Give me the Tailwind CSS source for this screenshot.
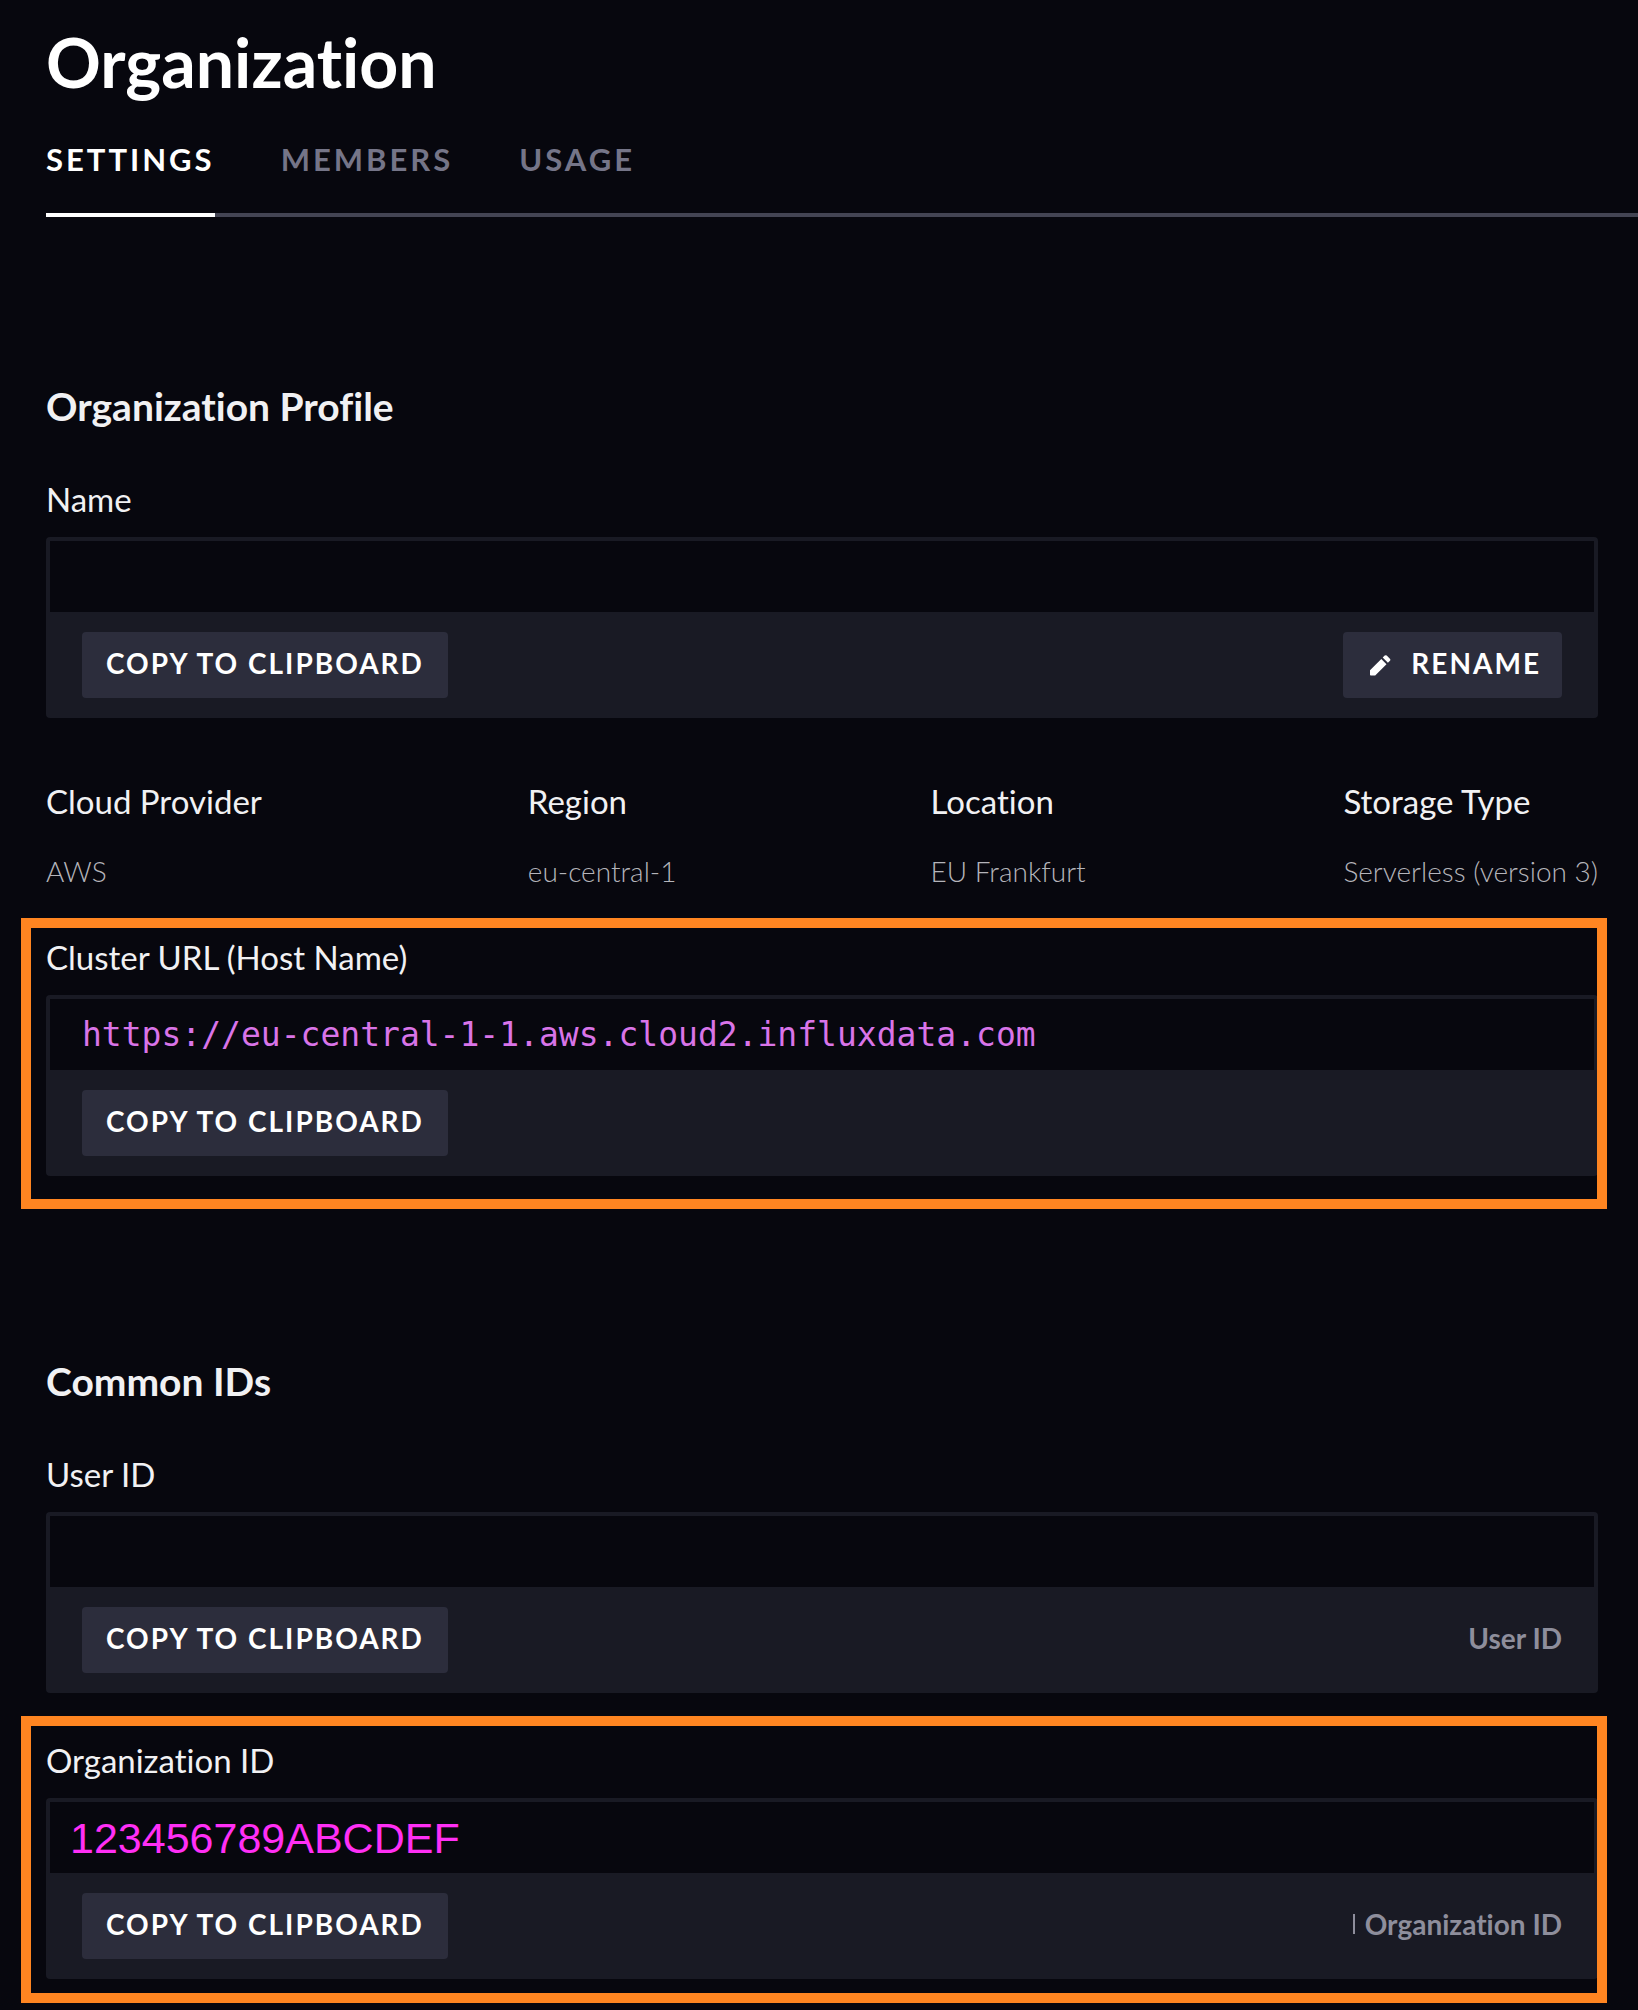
<!DOCTYPE html>
<html lang="en">
<head>
<meta charset="utf-8">
<meta name="viewport" content="width=device-width, initial-scale=1">
<title>Organization Settings</title>
<script src="https://cdn.jsdelivr.net/npm/@tailwindcss/browser@4"></script>
</head>
<body class="bg-[#07070e] font-['Lato',sans-serif] text-[#f1f1f3] [font-variant-ligatures:none]">
<div class="min-h-screen pl-[46px] pt-[22px] pb-[31px]">
  <header>
    <h1 class="text-[68px] leading-20 font-bold text-white">Organization</h1>
    <nav class="mt-[33px] flex gap-[66px] border-b-4 border-[#434453] text-[31px] leading-12 font-bold tracking-[3px] text-[#757588]">
      <a href="#settings" aria-current="page" class="-mb-1 border-b-4 border-white pb-[30px] text-white">SETTINGS</a>
      <a href="#members" class="pb-[30px]">MEMBERS</a>
      <a href="#usage" class="pb-[30px]">USAGE</a>
    </nav>
  </header>

  <main class="mr-10 mt-[165px]">
    <section>
      <h2 class="text-[39px] leading-12 font-bold">Organization Profile</h2>

      <div class="mt-[49px]">
        <label for="org-name" class="block text-[33px] leading-10">Name</label>
        <div class="mt-[18px] rounded-sm bg-[#191a24] px-1 pt-1">
          <input id="org-name" type="text" readonly class="block h-[71px] w-full bg-[#07070e] px-8 outline-none">
          <div class="flex items-center justify-between px-8 py-5">
            <button type="button" class="h-[66px] rounded-sm bg-[#2c2d3c] px-6 pb-1 text-[28px] font-bold tracking-[2px] text-white">COPY TO CLIPBOARD</button>
            <button type="button" class="flex h-[66px] items-center gap-5 rounded-sm bg-[#2c2d3c] pr-[21px] pl-[27px] text-[28px] font-bold tracking-[2px] text-white">
              <svg class="size-[21px]" viewBox="0 0 21 21" fill="currentColor" aria-hidden="true"><path d="M0 15.3 11.3 4l5.2 5.2L5.2 20.500H0.800Q0 20.500 0 19.700ZM12.700 2.600 14.700 0.600Q15.700-.2 16.700.6L19.900 3.800Q20.800 4.800 20 5.800L17.900 7.800Z"/></svg>
              <span class="pb-1">RENAME</span>
            </button>
          </div>
        </div>
      </div>

      <dl class="mt-[63px] grid grid-cols-[482fr_403fr_413fr_254fr]">
        <div><dt class="text-[33px] leading-10">Cloud Provider</dt><dd class="mt-[34px] text-[28px] leading-8 font-light text-[#b4b4ba]">AWS</dd></div>
        <div><dt class="text-[33px] leading-10">Region</dt><dd class="mt-[34px] text-[28px] leading-8 font-light text-[#b4b4ba]">eu-central-1</dd></div>
        <div><dt class="text-[33px] leading-10">Location</dt><dd class="mt-[34px] text-[28px] leading-8 font-light text-[#b4b4ba]">EU Frankfurt</dd></div>
        <div><dt class="text-[33px] leading-10">Storage Type</dt><dd class="mt-[34px] text-[28px] leading-8 font-light whitespace-nowrap text-[#b4b4ba]">Serverless (version 3)</dd></div>
      </dl>

      <div class="relative mt-[50px]">
        <label for="cluster-url" class="block text-[33px] leading-10">Cluster URL (Host Name)</label>
        <div class="mt-[18px] rounded-sm bg-[#191a24] px-1 pt-1">
          <input id="cluster-url" type="text" readonly value="https://eu-central-1-1.aws.cloud2.influxdata.com" class="block h-[71px] w-full bg-[#07070e] px-8 font-['DejaVu_Sans_Mono',monospace] text-[33px] text-[#d974e8] outline-none">
          <div class="flex items-center justify-between px-8 py-5">
            <button type="button" class="h-[66px] rounded-sm bg-[#2c2d3c] px-6 pb-1 text-[28px] font-bold tracking-[2px] text-white">COPY TO CLIPBOARD</button>
          </div>
        </div>
        <div class="pointer-events-none absolute -top-[19px] -right-[9px] -bottom-[33px] -left-[25px] border-10 border-[#ff8521]"></div>
      </div>
    </section>

    <section class="mt-[181px]">
      <h2 class="text-[39px] leading-12 font-bold">Common IDs</h2>

      <div class="mt-[49px]">
        <label for="user-id" class="block text-[33px] leading-10">User ID</label>
        <div class="mt-[18px] rounded-sm bg-[#191a24] px-1 pt-1">
          <input id="user-id" type="text" readonly class="block h-[71px] w-full bg-[#07070e] px-8 outline-none">
          <div class="flex items-center justify-between px-8 py-5">
            <button type="button" class="h-[66px] rounded-sm bg-[#2c2d3c] px-6 pb-1 text-[28px] font-bold tracking-[2px] text-white">COPY TO CLIPBOARD</button>
            <span class="pb-1 text-[28px] font-bold text-[#8e8e9c]">User ID</span>
          </div>
        </div>
      </div>

      <div class="relative mt-[47px]">
        <label for="org-id" class="block text-[33px] leading-10">Organization ID</label>
        <div class="mt-[18px] rounded-sm bg-[#191a24] px-1 pt-1">
          <input id="org-id" type="text" readonly value="123456789ABCDEF" class="block h-[71px] w-full bg-[#07070e] px-5 pt-0.5 font-['Liberation_Sans',sans-serif] text-[43px] text-[#ff2ff5] outline-none">
          <div class="flex items-center justify-between px-8 py-5">
            <button type="button" class="h-[66px] rounded-sm bg-[#2c2d3c] px-6 pb-1 text-[28px] font-bold tracking-[2px] text-white">COPY TO CLIPBOARD</button>
            <span class="flex items-center gap-[10px] pb-1 text-[28px] font-bold text-[#8e8e9c]"><span class="h-5 w-[2px] bg-[#8e8e9c]"></span>Organization ID</span>
          </div>
        </div>
        <div class="pointer-events-none absolute -top-6 -right-[9px] -bottom-6 -left-[25px] border-10 border-[#ff8521]"></div>
      </div>
    </section>
  </main>
</div>
</body>
</html>
